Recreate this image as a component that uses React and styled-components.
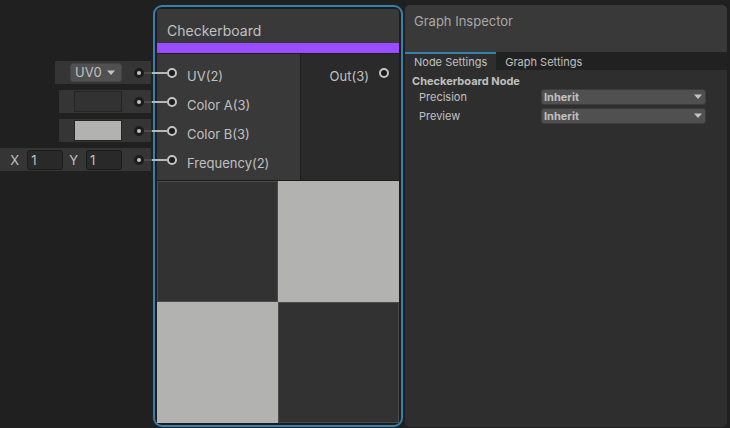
import React, { useState } from "react";
import styled, { createGlobalStyle } from "styled-components";

const GlobalStyle = createGlobalStyle`
  *, *::before, *::after { box-sizing: border-box; }
  body {
    margin: 0;
    background: #202020;
    color: #c0c0c0;
    font-family: Inter, "Liberation Sans", sans-serif;
  }
  button, input, select { font: inherit; color: inherit; margin: 0; }
`;

const Workspace = styled.main`
  display: flex;
  align-items: stretch;
  min-height: 100vh;
  padding: 5px 3px 1px 0;
`;

const SlotColumn = styled.div`
  flex: 0 0 153px;
  min-width: 0;
  display: flex;
  flex-direction: column;
  align-items: flex-end;
  gap: 6px;
  padding: 56px 2px 0 0;
`;

const Slot = styled.div`
  display: flex;
  align-items: center;
  height: 23px;
  padding: 0 7px 0 ${(p) => (p.$wide ? "10px" : "15px")};
  background: #353535;
  font-size: 13px;
`;

const SlotDot = styled.span`
  width: 10px;
  height: 10px;
  margin-left: 12px;
  border: 3px solid #1c1c1c;
  border-radius: 50%;
  background: #c4c4c4;
`;

const VectorLabel = styled.label`
  display: flex;
  align-items: center;
  gap: 8px;

  & + & { margin-left: 6px; }
`;

const NumberField = styled.input`
  width: 36px;
  height: 20px;
  padding: 0 3px;
  border: 1px solid #1c1c1c;
  border-radius: 3px;
  background: #292929;
`;

const Swatch = styled.input`
  appearance: none;
  width: 48px;
  height: 21px;
  padding: 0;
  border: 1px solid #242424;
  background: none;

  &::-webkit-color-swatch-wrapper { padding: 0; }
  &::-webkit-color-swatch { border: 0; border-radius: 0; }
`;

const SelectBox = styled.span`
  position: relative;
  display: block;
  width: ${(p) => (p.$compact ? "52px" : "auto")};
`;

const SelectControl = styled.select`
  appearance: none;
  display: block;
  width: 100%;
  height: ${(p) => (p.$compact ? "19px" : "16px")};
  padding: 0 ${(p) => (p.$compact ? "4px" : "2px")};
  border: 1px solid ${(p) => (p.$compact ? "#444" : "#3c3c3c")};
  border-radius: 3px;
  background: #505050;
  font-size: ${(p) => (p.$compact ? "13px" : "11px")};
  font-weight: ${(p) => (p.$compact ? 400 : 700)};
  line-height: ${(p) => (p.$compact ? "17px" : "14px")};
`;

const Arrow = styled.svg`
  position: absolute;
  top: 50%;
  right: ${(p) => (p.$compact ? "7px" : "4px")};
  width: 8px;
  height: 5px;
  margin-top: -3px;
  fill: #c4c4c4;
  pointer-events: none;
`;

const Node = styled.article`
  flex: 0 0 250px;
  align-self: flex-start;
  padding: 2px;
  border: 2px solid #3580ad;
  border-radius: 9px;
  background: #1d1d1d;
`;

const NodeTitle = styled.h1`
  margin: 0;
  padding: 12px 10px 2px;
  border-bottom: 10px solid #9a4dff;
  border-radius: 3px 3px 0 0;
  background: #393939;
  font-size: 14px;
  font-weight: 400;
  line-height: 20px;
`;

const Ports = styled.div`
  display: grid;
  grid-template-columns: 143px 1fr;
  gap: 1px;
  padding: 1px 0;
`;

const PortList = styled.ul`
  display: flex;
  flex-direction: column;
  align-items: ${(p) => (p.$output ? "flex-end" : "flex-start")};
  gap: 9px;
  margin: 0;
  padding: 9px 10px 10px;
  list-style: none;
  background: ${(p) => (p.$output ? "#2a2a2a" : "#393939")};
`;

const Port = styled.li`
  display: flex;
  gap: 10px;
  height: 20px;
  font-size: 13px;
`;

const PortName = styled.span`
  padding-top: 3px;
  line-height: 20px;
`;

const Socket = styled.span`
  position: relative;
  width: 10px;
  height: 10px;
  margin-top: 5px;
  border: 2px solid #c4c4c4;
  border-radius: 50%;
  background: #1c1c1c;
`;

const Wire = styled.span`
  position: absolute;
  top: 2px;
  right: 8px;
  width: 23px;
  height: 2px;
  background: linear-gradient(to right, #4c4c4c 8px, #b8b8b8 8px);
`;

const Preview = styled.div`
  display: grid;
  grid-template-columns: 1fr 1fr;
  aspect-ratio: 1;
`;

const Tile = styled.div`
  background: ${(p) => (p.$light ? "#b2b2b0" : "#323232")};
  border: ${(p) => (p.$light ? "0" : "1px solid #4c4c4c")};
`;

const Inspector = styled.aside`
  flex: 1;
  min-width: 0;
  margin-left: 2px;
  border-radius: 5px;
  background: #2e2e2e;
  overflow: hidden;
`;

const InspectorTitle = styled.h2`
  margin: 0;
  padding: 6px 9px 21px;
  background: #393939;
  color: #a8a8a8;
  font-size: 13px;
  font-weight: 400;
  line-height: 20px;
`;

const Tabs = styled.div`
  display: flex;
  background: #212121;
`;

const Tab = styled.button`
  height: 18px;
  padding: 0 9px;
  border: 0;
  border-top: 2px solid ${(p) => (p.$active ? "#3580ad" : "transparent")};
  background: ${(p) => (p.$active ? "#2e2e2e" : "transparent")};
  font-size: 11px;
  line-height: 16px;
`;

const Settings = styled.section`
  padding: 3px 21px 0 7px;
`;

const SectionTitle = styled.h3`
  margin: 0;
  font-size: 11px;
  font-weight: 700;
  line-height: 16px;
`;

const Field = styled.div`
  display: grid;
  grid-template-columns: 122px 1fr;
  margin-bottom: 3px;
  padding-left: 7px;
`;

const FieldLabel = styled.label`
  font-size: 11px;
  line-height: 16px;
`;

function Dropdown({ compact, options, ...rest }) {
  return (
    <SelectBox $compact={compact}>
      <SelectControl $compact={compact} {...rest}>
        {options.map((o) => (
          <option key={o}>{o}</option>
        ))}
      </SelectControl>
      <Arrow $compact={compact} viewBox="0 0 8 5" aria-hidden="true">
        <path d="M0 0.5H8L4 5Z" />
      </Arrow>
    </SelectBox>
  );
}

const inputs = ["UV(2)", "Color A(3)", "Color B(3)", "Frequency(2)"];
const precision = ["Inherit", "Single", "Half"];
const previewModes = ["Inherit", "Preview 2D", "Preview 3D"];

export default function App() {
  const [tab, setTab] = useState("Node Settings");
  return (
    <>
      <GlobalStyle />
      <Workspace>
        <SlotColumn>
          <Slot>
            <Dropdown compact aria-label="UV channel" options={["UV0", "UV1", "UV2", "UV3"]} />
            <SlotDot />
          </Slot>
          <Slot>
            <Swatch type="color" defaultValue="#323232" aria-label="Color A" />
            <SlotDot />
          </Slot>
          <Slot>
            <Swatch type="color" defaultValue="#b2b2b0" aria-label="Color B" />
            <SlotDot />
          </Slot>
          <Slot $wide>
            <VectorLabel>
              X <NumberField defaultValue="1" />
            </VectorLabel>
            <VectorLabel>
              Y <NumberField defaultValue="1" />
            </VectorLabel>
            <SlotDot />
          </Slot>
        </SlotColumn>

        <Node>
          <NodeTitle>Checkerboard</NodeTitle>
          <Ports>
            <PortList>
              {inputs.map((name) => (
                <Port key={name}>
                  <Socket>
                    <Wire />
                  </Socket>
                  <PortName>{name}</PortName>
                </Port>
              ))}
            </PortList>
            <PortList $output>
              <Port>
                <PortName>Out(3)</PortName>
                <Socket />
              </Port>
            </PortList>
          </Ports>
          <Preview>
            <Tile />
            <Tile $light />
            <Tile $light />
            <Tile />
          </Preview>
        </Node>

        <Inspector>
          <InspectorTitle>Graph Inspector</InspectorTitle>
          <Tabs role="tablist">
            {["Node Settings", "Graph Settings"].map((name) => (
              <Tab
                key={name}
                type="button"
                role="tab"
                aria-selected={tab === name}
                $active={tab === name}
                onClick={() => setTab(name)}
              >
                {name}
              </Tab>
            ))}
          </Tabs>
          <Settings>
            <SectionTitle>Checkerboard Node</SectionTitle>
            <Field>
              <FieldLabel htmlFor="precision">Precision</FieldLabel>
              <Dropdown id="precision" options={precision} />
            </Field>
            <Field>
              <FieldLabel htmlFor="preview">Preview</FieldLabel>
              <Dropdown id="preview" options={previewModes} />
            </Field>
          </Settings>
        </Inspector>
      </Workspace>
    </>
  );
}
